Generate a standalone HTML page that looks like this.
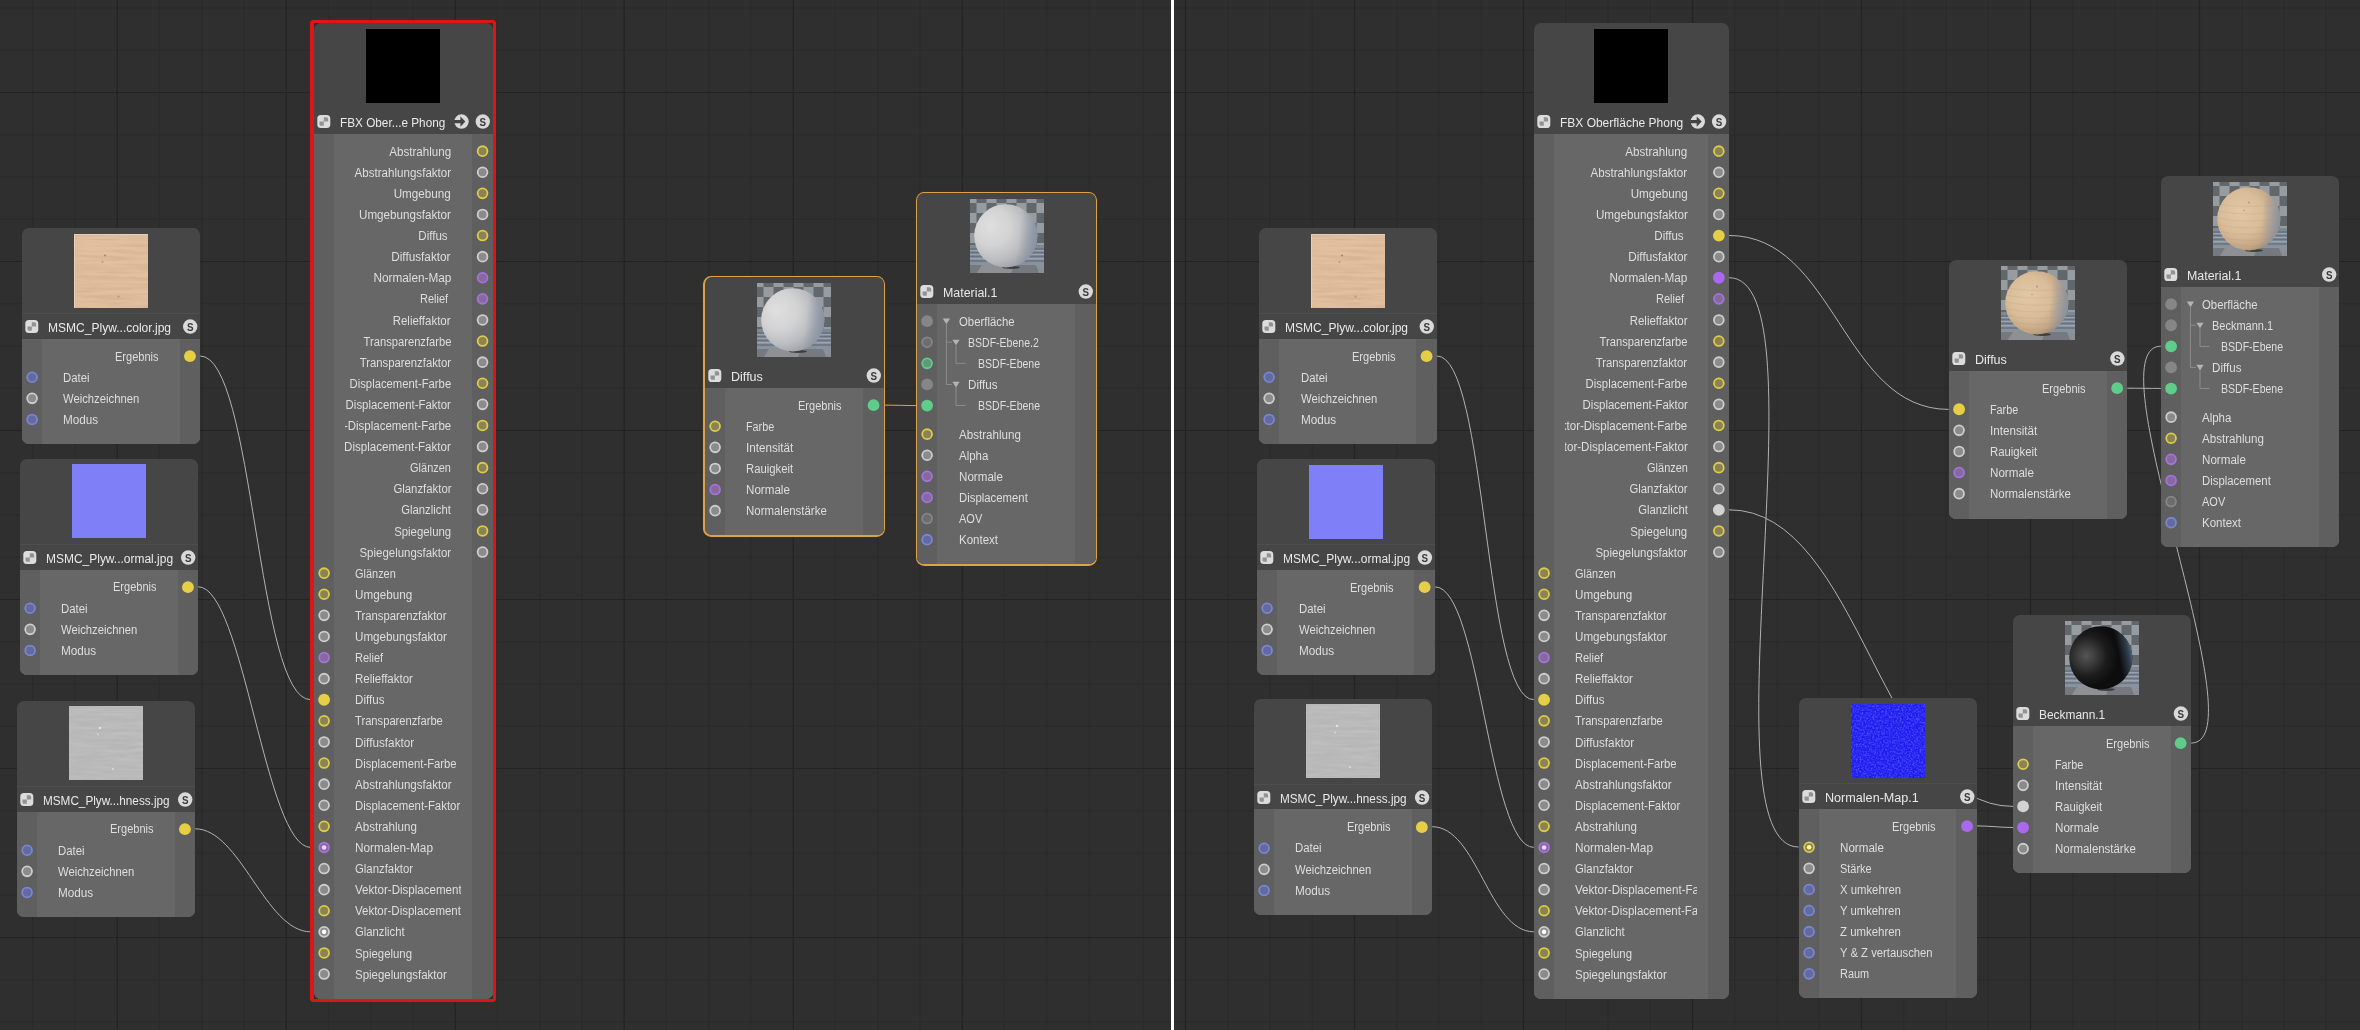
<!DOCTYPE html><html lang="de"><head><meta charset="utf-8"><title>Node-Editor</title><style>
html,body{margin:0;padding:0}
body{width:2360px;height:1030px;overflow:hidden;position:relative;background:#2f2f2f;font-family:"Liberation Sans",sans-serif;font-size:12px;color:#dedede}
.pl{position:absolute;top:0;height:1030px;background-color:#2f2f2f}
.n{position:absolute;background:#464646;border-radius:7px;overflow:hidden}
.n .b{position:absolute;left:0;right:0;top:110.9px;background:#676767}
.n .b i{position:absolute;top:0;bottom:0;background:#5f5f5f}
.n .b i.l{left:0;width:20px}
.n .b i.r{right:0;width:20.7px}
.n .sep{position:absolute;left:0;right:0;top:85.6px;height:1px;background:#4e4e4e}
.pv{position:absolute;top:5.75px;width:74px;height:74px;overflow:hidden}
.pv svg{display:block}
.t{position:absolute;left:26.0px;top:90.2px;height:20px;line-height:20px;white-space:nowrap;overflow:hidden;color:#e9e9e9}
.lo{position:absolute;left:31px;right:39.7px;height:20px;line-height:20px;overflow:hidden;white-space:nowrap;display:flex;justify-content:flex-end}
.lo span{flex:none;display:block;transform-origin:100% 50%;padding-right:2.2px}
.sl{display:inline-block;transform-origin:0 50%}
.li{position:absolute;left:41.5px;right:32px;height:20px;line-height:20px;overflow:hidden;white-space:nowrap}
.ov{position:absolute;left:0;top:0;will-change:transform;font-family:"Liberation Sans",sans-serif}
</style></head><body>
<svg width="0" height="0" style="position:absolute"><defs>
<pattern id="ck" width="20" height="20" patternUnits="userSpaceOnUse" x="-3.5" y="-6"><rect width="20" height="20" fill="#62676c"/><rect width="10" height="10" fill="#979ca1"/><rect x="10" y="10" width="10" height="10" fill="#979ca1"/></pattern>
<linearGradient id="fl" x1="0" y1="0" x2="0" y2="1"><stop offset="0" stop-color="#7d8894"/><stop offset=".7" stop-color="#8a939d"/><stop offset="1" stop-color="#8b8d90"/></linearGradient>
<radialGradient id="gW" cx=".34" cy=".4" r=".74" fx=".24" fy=".34"><stop offset="0" stop-color="#dfdfdf"/><stop offset=".4" stop-color="#d3d3d4"/><stop offset=".68" stop-color="#bcbdc0"/><stop offset=".88" stop-color="#a0a4ab"/><stop offset="1" stop-color="#8a9099"/></radialGradient>
<radialGradient id="gO" cx=".4" cy=".44" r=".68" fx=".36" fy=".38"><stop offset="0" stop-color="#e1c8a6"/><stop offset=".5" stop-color="#d9bd99"/><stop offset=".78" stop-color="#c4a685"/><stop offset=".93" stop-color="#a38d70"/><stop offset="1" stop-color="#897d6b"/></radialGradient>
<radialGradient id="gB" cx=".27" cy=".47" r=".5"><stop offset="0" stop-color="#555"/><stop offset=".3" stop-color="#3c3c3c"/><stop offset=".65" stop-color="#1c1c1c"/><stop offset="1" stop-color="#0d0d0d"/></radialGradient>
<linearGradient id="rimw" x1="0" y1=".45" x2="1" y2=".55"><stop offset=".7" stop-color="#8c96a6" stop-opacity="0"/><stop offset=".86" stop-color="#8c96a6" stop-opacity=".55"/><stop offset="1" stop-color="#8791a2" stop-opacity=".95"/></linearGradient>
<linearGradient id="rimb" x1="0" y1=".6" x2="1" y2=".4"><stop offset=".78" stop-color="#4d6680" stop-opacity="0"/><stop offset=".93" stop-color="#4d6680" stop-opacity=".55"/><stop offset="1" stop-color="#5d7a94" stop-opacity=".9"/></linearGradient>
<clipPath id="cs"><circle cx="35.8" cy="36.8" r="31.6"/></clipPath>
<filter id="fwood" x="0" y="0" width="100%" height="100%" color-interpolation-filters="sRGB"><feTurbulence type="fractalNoise" baseFrequency="0.018 0.3" numOctaves="3" seed="4" result="n"/><feColorMatrix in="n" type="matrix" values="0 0 0 0 0.76  0 0 0 0 0.58  0 0 0 0 0.42  0.7 0 0 0 -0.24" result="c"/><feComposite in="c" in2="SourceGraphic" operator="in" result="ci"/><feMerge><feMergeNode in="SourceGraphic"/><feMergeNode in="ci"/></feMerge></filter>
<filter id="frough" x="0" y="0" width="100%" height="100%" color-interpolation-filters="sRGB"><feTurbulence type="fractalNoise" baseFrequency="0.03 0.3" numOctaves="3" seed="9" result="n"/><feColorMatrix in="n" type="matrix" values="0 0 0 0 0.82  0 0 0 0 0.82  0 0 0 0 0.82  0.65 0 0 0 -0.2" result="c"/><feComposite in="c" in2="SourceGraphic" operator="in" result="ci"/><feMerge><feMergeNode in="SourceGraphic"/><feMergeNode in="ci"/></feMerge></filter>
<filter id="fnoise" x="0" y="0" width="100%" height="100%" color-interpolation-filters="sRGB"><feTurbulence type="fractalNoise" baseFrequency="0.55" numOctaves="2" seed="3" result="n"/><feColorMatrix in="n" type="matrix" values="0 0 0 0 0.30  0 0 0 0 0.32  0 0 0 0 1  2.4 0 0 0 -0.9" result="c"/><feColorMatrix in="n" type="matrix" values="0 0 0 0 0.12  0 0 0 0 0.04  0 0 0 0 0.86  0 1.6 0 0 -0.68" result="d"/><feMerge result="m"><feMergeNode in="SourceGraphic"/><feMergeNode in="c"/><feMergeNode in="d"/></feMerge><feComposite in="m" in2="SourceGraphic" operator="in"/></filter>
</defs></svg>
<svg style="position:absolute;left:0;top:0" width="2360" height="1030" viewBox="0 0 2360 1030"><path d="M0 8.00H2360M0 50.25H2360M0 134.75H2360M0 177.00H2360M0 219.25H2360M0 303.75H2360M0 346.00H2360M0 388.25H2360M0 472.75H2360M0 515.00H2360M0 557.25H2360M0 641.75H2360M0 684.00H2360M0 726.25H2360M0 810.75H2360M0 853.00H2360M0 895.25H2360M0 979.75H2360M0 1022.00H2360M32.70 0V1030M74.95 0V1030M159.45 0V1030M201.70 0V1030M243.95 0V1030M328.45 0V1030M370.70 0V1030M412.95 0V1030M497.45 0V1030M539.70 0V1030M581.95 0V1030M666.45 0V1030M708.70 0V1030M750.95 0V1030M835.45 0V1030M877.70 0V1030M919.95 0V1030M1004.45 0V1030M1046.70 0V1030M1088.95 0V1030M1143.5 0V1030M1227.75 0V1030M1270.00 0V1030M1312.25 0V1030M1396.75 0V1030M1439.00 0V1030M1481.25 0V1030M1565.75 0V1030M1608.00 0V1030M1650.25 0V1030M1734.75 0V1030M1777.00 0V1030M1819.25 0V1030M1903.75 0V1030M1946.00 0V1030M1988.25 0V1030M2072.75 0V1030M2115.00 0V1030M2157.25 0V1030M2241.75 0V1030M2284.00 0V1030M2326.25 0V1030" stroke="#2b2b2b" stroke-width="1.1" fill="none"/><path d="M0 92.50H2360M0 261.50H2360M0 430.50H2360M0 599.50H2360M0 768.50H2360M0 937.50H2360M117.20 0V1030M286.20 0V1030M455.20 0V1030M624.20 0V1030M793.20 0V1030M962.20 0V1030M1185.50 0V1030M1354.50 0V1030M1523.50 0V1030M1692.50 0V1030M1861.50 0V1030M2030.50 0V1030M2199.50 0V1030" stroke="#232323" stroke-width="1.2" fill="none"/></svg>
<div style="position:absolute;left:1170.9px;top:0;width:3.5px;height:1030px;background:#fff"></div>
<svg style="position:absolute;left:0;top:0" width="2360" height="1030" viewBox="0 0 2360 1030" fill="none" stroke-width="1"><path d="M200.2 356.0C254.2 356.0 256.6 699.7 310.6 699.7" stroke="#b2b2b2"/><path d="M198.2 586.8C243.2 586.8 265.6 847.4 310.6 847.4" stroke="#b2b2b2"/><path d="M195.2 828.8C240.2 828.8 265.6 931.8 310.6 931.8" stroke="#b2b2b2"/><path d="M883.6 405.1C893.6 405.1 907.0 405.6 917.0 405.6" stroke="#dda149"/><path d="M1437.0 356.0C1487.0 356.0 1483.8 699.7 1533.8 699.7" stroke="#b2b2b2"/><path d="M1435.1 586.9C1480.1 586.9 1488.8 847.4 1533.8 847.4" stroke="#b2b2b2"/><path d="M1432.2 826.7C1477.2 826.7 1488.8 931.8 1533.8 931.8" stroke="#b2b2b2"/><path d="M1729.1 235.5C1835.1 235.5 1842.6 409.4 1948.6 409.4" stroke="#b2b2b2"/><path d="M1729.1 277.7C1827.1 277.7 1700.6 847.0 1798.6 847.0" stroke="#b2b2b2"/><path d="M1729.1 509.8C1861.1 509.8 1881.1 806.4 2013.1 806.4" stroke="#b2b2b2"/><path d="M1977.1 825.9C1989.1 825.9 2001.1 827.5 2013.1 827.5" stroke="#b2b2b2"/><path d="M2127.2 388.2C2137.2 388.2 2150.9 388.4 2160.9 388.4" stroke="#b2b2b2"/><path d="M2191.2 743.0C2261.2 743.0 2090.9 346.2 2160.9 346.2" stroke="#b2b2b2"/></svg>
<div class="n" style="left:21.80px;top:227.85px;width:178.40px;height:216.25px">
<div class="b" style="height:105.35px"><i class="l"></i><i class="r"></i></div>
<div class="sep"></div>
<div class="pv" style="left:52.20px"><svg width="74" height="74" viewBox="0 0 74 74"><rect width="74" height="74" fill="#e2c1a2" filter="url(#fwood)"/><circle cx="31" cy="21.5" r="1.1" fill="#a8804e" opacity=".8"/><circle cx="28.5" cy="28" r=".9" fill="#b08858" opacity=".7"/><circle cx="44.5" cy="62.5" r="1" fill="#ac8450" opacity=".7"/><path d="M0 .5h74M.5 0v74" stroke="#f0dcc4" stroke-width="1" opacity=".6"/></svg></div>
<div class="t" style="width:133.9px"><span class="sl" style="transform:scaleX(1.0029)">MSMC_Plyw...color.jpg</span></div>
<div class="lo" style="top:118.85px"><span style="transform:scaleX(0.9192)">Ergebnis</span></div>
<div class="li" style="top:139.95px"><span class="sl" style="transform:scaleX(0.9502)">Datei</span></div>
<div class="li" style="top:161.05px"><span class="sl" style="transform:scaleX(0.9393)">Weichzeichnen</span></div>
<div class="li" style="top:182.15px"><span class="sl" style="transform:scaleX(0.9778)">Modus</span></div>
<svg class="ov" width="178.40" height="216.25" viewBox="0 0 178.40 216.25"><g transform="translate(3.30,92.05)"><rect width="13" height="13" rx="3.6" fill="#dcdcdc"/><path d="M6.5 2.2h2.6a1.7 1.7 0 0 1 1.7 1.7v2.6h-4.3z" fill="#929292"/><path d="M2.2 6.5h4.3v4.3h-2.6a1.7 1.7 0 0 1-1.7-1.7z" fill="#929292"/></g><circle cx="168.20" cy="98.55" r="7.2" fill="#d9d9d9"/><text transform="translate(168.20,102.55) scale(.86,1)" text-anchor="middle" font-size="11.4" font-weight="700" fill="#3a3a3a">S</text><circle cx="167.95" cy="128.15" r="5.9" fill="#e6cf45"/><circle cx="10.10" cy="149.25" r="4.9" fill="#626aa0" stroke="#7886d4" stroke-width="1.8"/><circle cx="10.10" cy="170.35" r="4.9" fill="#8b8b8b" stroke="#cdcdcd" stroke-width="1.8"/><circle cx="10.10" cy="191.45" r="4.9" fill="#626aa0" stroke="#7886d4" stroke-width="1.8"/></svg>
</div>
<div class="n" style="left:19.80px;top:458.65px;width:178.40px;height:216.25px">
<div class="b" style="height:105.35px"><i class="l"></i><i class="r"></i></div>
<div class="sep"></div>
<div class="pv" style="left:52.20px"><svg width="74" height="74" viewBox="0 0 74 74"><rect width="74" height="74" fill="#7f7ff8"/></svg></div>
<div class="t" style="width:133.9px"><span class="sl" style="transform:scaleX(0.9977)">MSMC_Plyw...ormal.jpg</span></div>
<div class="lo" style="top:118.85px"><span style="transform:scaleX(0.9192)">Ergebnis</span></div>
<div class="li" style="top:139.95px"><span class="sl" style="transform:scaleX(0.9502)">Datei</span></div>
<div class="li" style="top:161.05px"><span class="sl" style="transform:scaleX(0.9393)">Weichzeichnen</span></div>
<div class="li" style="top:182.15px"><span class="sl" style="transform:scaleX(0.9778)">Modus</span></div>
<svg class="ov" width="178.40" height="216.25" viewBox="0 0 178.40 216.25"><g transform="translate(3.30,92.05)"><rect width="13" height="13" rx="3.6" fill="#dcdcdc"/><path d="M6.5 2.2h2.6a1.7 1.7 0 0 1 1.7 1.7v2.6h-4.3z" fill="#929292"/><path d="M2.2 6.5h4.3v4.3h-2.6a1.7 1.7 0 0 1-1.7-1.7z" fill="#929292"/></g><circle cx="168.20" cy="98.55" r="7.2" fill="#d9d9d9"/><text transform="translate(168.20,102.55) scale(.86,1)" text-anchor="middle" font-size="11.4" font-weight="700" fill="#3a3a3a">S</text><circle cx="167.95" cy="128.15" r="5.9" fill="#e6cf45"/><circle cx="10.10" cy="149.25" r="4.9" fill="#626aa0" stroke="#7886d4" stroke-width="1.8"/><circle cx="10.10" cy="170.35" r="4.9" fill="#8b8b8b" stroke="#cdcdcd" stroke-width="1.8"/><circle cx="10.10" cy="191.45" r="4.9" fill="#626aa0" stroke="#7886d4" stroke-width="1.8"/></svg>
</div>
<div class="n" style="left:16.80px;top:700.65px;width:178.40px;height:216.25px">
<div class="b" style="height:105.35px"><i class="l"></i><i class="r"></i></div>
<div class="sep"></div>
<div class="pv" style="left:52.20px"><svg width="74" height="74" viewBox="0 0 74 74"><rect width="74" height="74" fill="#b7b7b7" filter="url(#frough)"/><circle cx="31" cy="22" r="1.2" fill="#e2e2e2"/><circle cx="29" cy="28.5" r=".9" fill="#dadada"/><circle cx="44" cy="63" r="1" fill="#dcdcdc"/></svg></div>
<div class="t" style="width:133.9px"><span class="sl" style="transform:scaleX(0.9781)">MSMC_Plyw...hness.jpg</span></div>
<div class="lo" style="top:118.85px"><span style="transform:scaleX(0.9192)">Ergebnis</span></div>
<div class="li" style="top:139.95px"><span class="sl" style="transform:scaleX(0.9502)">Datei</span></div>
<div class="li" style="top:161.05px"><span class="sl" style="transform:scaleX(0.9393)">Weichzeichnen</span></div>
<div class="li" style="top:182.15px"><span class="sl" style="transform:scaleX(0.9778)">Modus</span></div>
<svg class="ov" width="178.40" height="216.25" viewBox="0 0 178.40 216.25"><g transform="translate(3.30,92.05)"><rect width="13" height="13" rx="3.6" fill="#dcdcdc"/><path d="M6.5 2.2h2.6a1.7 1.7 0 0 1 1.7 1.7v2.6h-4.3z" fill="#929292"/><path d="M2.2 6.5h4.3v4.3h-2.6a1.7 1.7 0 0 1-1.7-1.7z" fill="#929292"/></g><circle cx="168.20" cy="98.55" r="7.2" fill="#d9d9d9"/><text transform="translate(168.20,102.55) scale(.86,1)" text-anchor="middle" font-size="11.4" font-weight="700" fill="#3a3a3a">S</text><circle cx="167.95" cy="128.15" r="5.9" fill="#e6cf45"/><circle cx="10.10" cy="149.25" r="4.9" fill="#626aa0" stroke="#7886d4" stroke-width="1.8"/><circle cx="10.10" cy="170.35" r="4.9" fill="#8b8b8b" stroke="#cdcdcd" stroke-width="1.8"/><circle cx="10.10" cy="191.45" r="4.9" fill="#626aa0" stroke="#7886d4" stroke-width="1.8"/></svg>
</div>
<div style="position:absolute;left:309.70px;top:19.50px;width:179.20px;height:976.15px;border:solid #de1515;border-width:3.35px 3.4px 3.3px 4.2px;border-radius:3.5px"></div>
<div class="n" style="left:313.80px;top:22.95px;width:179.00px;height:975.85px">
<div class="b" style="height:864.95px"><i class="l"></i><i class="r"></i></div>
<div class="pv" style="left:52.50px"><svg width="74" height="74" viewBox="0 0 74 74"><rect width="74" height="74" fill="#000"/></svg></div>
<div class="t" style="width:114.5px"><span class="sl" style="transform:scaleX(0.9803)">FBX Ober...e Phong</span></div>
<div class="lo" style="top:118.85px"><span style="transform:scaleX(0.9664)">Abstrahlung</span></div>
<div class="lo" style="top:139.95px"><span style="transform:scaleX(0.9652)">Abstrahlungsfaktor</span></div>
<div class="lo" style="top:161.05px"><span style="transform:scaleX(0.9731)">Umgebung</span></div>
<div class="lo" style="top:182.15px"><span style="transform:scaleX(0.9693)">Umgebungsfaktor</span></div>
<div class="lo" style="top:203.25px"><span style="transform:scaleX(0.9646)">Diffus&nbsp;</span></div>
<div class="lo" style="top:224.35px"><span style="transform:scaleX(0.9798)">Diffusfaktor</span></div>
<div class="lo" style="top:245.45px"><span style="transform:scaleX(0.9822)">Normalen-Map</span></div>
<div class="lo" style="top:266.55px"><span style="transform:scaleX(0.9185)">Relief&nbsp;</span></div>
<div class="lo" style="top:287.65px"><span style="transform:scaleX(0.9573)">Relieffaktor</span></div>
<div class="lo" style="top:308.75px"><span style="transform:scaleX(0.9318)">Transparenzfarbe</span></div>
<div class="lo" style="top:329.85px"><span style="transform:scaleX(0.9431)">Transparenzfaktor</span></div>
<div class="lo" style="top:350.95px"><span style="transform:scaleX(0.9406)">Displacement-Farbe</span></div>
<div class="lo" style="top:372.05px"><span style="transform:scaleX(0.9503)">Displacement-Faktor</span></div>
<div class="lo" style="top:393.15px"><span style="transform:scaleX(0.9568)">Vektor-Displacement-Farbe</span></div>
<div class="lo" style="top:414.25px"><span style="transform:scaleX(0.9637)">Vektor-Displacement-Faktor</span></div>
<div class="lo" style="top:435.35px"><span style="transform:scaleX(0.9124)">Glänzen</span></div>
<div class="lo" style="top:456.45px"><span style="transform:scaleX(0.9462)">Glanzfaktor</span></div>
<div class="lo" style="top:477.55px"><span style="transform:scaleX(0.9404)">Glanzlicht</span></div>
<div class="lo" style="top:498.65px"><span style="transform:scaleX(0.9495)">Spiegelung</span></div>
<div class="lo" style="top:519.75px"><span style="transform:scaleX(0.9546)">Spiegelungsfaktor</span></div>
<div class="li" style="top:540.85px"><span class="sl" style="transform:scaleX(0.9124)">Glänzen</span></div>
<div class="li" style="top:561.95px"><span class="sl" style="transform:scaleX(0.9731)">Umgebung</span></div>
<div class="li" style="top:583.05px"><span class="sl" style="transform:scaleX(0.9431)">Transparenzfaktor</span></div>
<div class="li" style="top:604.15px"><span class="sl" style="transform:scaleX(0.9693)">Umgebungsfaktor</span></div>
<div class="li" style="top:625.25px"><span class="sl" style="transform:scaleX(0.9156)">Relief</span></div>
<div class="li" style="top:646.35px"><span class="sl" style="transform:scaleX(0.9573)">Relieffaktor</span></div>
<div class="li" style="top:667.45px"><span class="sl" style="transform:scaleX(0.9667)">Diffus</span></div>
<div class="li" style="top:688.55px"><span class="sl" style="transform:scaleX(0.9318)">Transparenzfarbe</span></div>
<div class="li" style="top:709.65px"><span class="sl" style="transform:scaleX(0.9798)">Diffusfaktor</span></div>
<div class="li" style="top:730.75px"><span class="sl" style="transform:scaleX(0.9406)">Displacement-Farbe</span></div>
<div class="li" style="top:751.85px"><span class="sl" style="transform:scaleX(0.9652)">Abstrahlungsfaktor</span></div>
<div class="li" style="top:772.95px"><span class="sl" style="transform:scaleX(0.9503)">Displacement-Faktor</span></div>
<div class="li" style="top:794.05px"><span class="sl" style="transform:scaleX(0.9664)">Abstrahlung</span></div>
<div class="li" style="top:815.15px"><span class="sl" style="transform:scaleX(0.9822)">Normalen-Map</span></div>
<div class="li" style="top:836.25px"><span class="sl" style="transform:scaleX(0.9462)">Glanzfaktor</span></div>
<div class="li" style="top:857.35px"><span class="sl" style="transform:scaleX(0.9637)">Vektor-Displacement-Faktor</span></div>
<div class="li" style="top:878.45px"><span class="sl" style="transform:scaleX(0.9568)">Vektor-Displacement-Farbe</span></div>
<div class="li" style="top:899.55px"><span class="sl" style="transform:scaleX(0.9404)">Glanzlicht</span></div>
<div class="li" style="top:920.65px"><span class="sl" style="transform:scaleX(0.9495)">Spiegelung</span></div>
<div class="li" style="top:941.75px"><span class="sl" style="transform:scaleX(0.9546)">Spiegelungsfaktor</span></div>
<svg class="ov" width="179.00" height="975.85" viewBox="0 0 179.00 975.85"><g transform="translate(3.30,92.05)"><rect width="13" height="13" rx="3.6" fill="#dcdcdc"/><path d="M6.5 2.2h2.6a1.7 1.7 0 0 1 1.7 1.7v2.6h-4.3z" fill="#929292"/><path d="M2.2 6.5h4.3v4.3h-2.6a1.7 1.7 0 0 1-1.7-1.7z" fill="#929292"/></g><circle cx="168.80" cy="98.55" r="7.2" fill="#d9d9d9"/><text transform="translate(168.80,102.55) scale(.86,1)" text-anchor="middle" font-size="11.4" font-weight="700" fill="#3a3a3a">S</text><g transform="translate(147.50,98.55)"><circle r="7.2" fill="#d9d9d9"/><path d="M-7.6 -1.65H-1.1V-5.1L3.9 0L-1.1 5.1V1.65H-7.6Z" fill="#444"/></g><circle cx="168.55" cy="128.15" r="4.9" fill="#8c8258" stroke="#ddcd45" stroke-width="1.8"/><circle cx="168.55" cy="149.25" r="4.9" fill="#8b8b8b" stroke="#cdcdcd" stroke-width="1.8"/><circle cx="168.55" cy="170.35" r="4.9" fill="#8c8258" stroke="#ddcd45" stroke-width="1.8"/><circle cx="168.55" cy="191.45" r="4.9" fill="#8b8b8b" stroke="#cdcdcd" stroke-width="1.8"/><circle cx="168.55" cy="212.55" r="4.9" fill="#8c8258" stroke="#ddcd45" stroke-width="1.8"/><circle cx="168.55" cy="233.65" r="4.9" fill="#8b8b8b" stroke="#cdcdcd" stroke-width="1.8"/><circle cx="168.55" cy="254.75" r="4.9" fill="#87689f" stroke="#a274dc" stroke-width="1.8"/><circle cx="168.55" cy="275.85" r="4.9" fill="#87689f" stroke="#a274dc" stroke-width="1.8"/><circle cx="168.55" cy="296.95" r="4.9" fill="#8b8b8b" stroke="#cdcdcd" stroke-width="1.8"/><circle cx="168.55" cy="318.05" r="4.9" fill="#8c8258" stroke="#ddcd45" stroke-width="1.8"/><circle cx="168.55" cy="339.15" r="4.9" fill="#8b8b8b" stroke="#cdcdcd" stroke-width="1.8"/><circle cx="168.55" cy="360.25" r="4.9" fill="#8c8258" stroke="#ddcd45" stroke-width="1.8"/><circle cx="168.55" cy="381.35" r="4.9" fill="#8b8b8b" stroke="#cdcdcd" stroke-width="1.8"/><circle cx="168.55" cy="402.45" r="4.9" fill="#8c8258" stroke="#ddcd45" stroke-width="1.8"/><circle cx="168.55" cy="423.55" r="4.9" fill="#8b8b8b" stroke="#cdcdcd" stroke-width="1.8"/><circle cx="168.55" cy="444.65" r="4.9" fill="#8c8258" stroke="#ddcd45" stroke-width="1.8"/><circle cx="168.55" cy="465.75" r="4.9" fill="#8b8b8b" stroke="#cdcdcd" stroke-width="1.8"/><circle cx="168.55" cy="486.85" r="4.9" fill="#8b8b8b" stroke="#cdcdcd" stroke-width="1.8"/><circle cx="168.55" cy="507.95" r="4.9" fill="#8c8258" stroke="#ddcd45" stroke-width="1.8"/><circle cx="168.55" cy="529.05" r="4.9" fill="#8b8b8b" stroke="#cdcdcd" stroke-width="1.8"/><circle cx="10.10" cy="550.15" r="4.9" fill="#8c8258" stroke="#ddcd45" stroke-width="1.8"/><circle cx="10.10" cy="571.25" r="4.9" fill="#8c8258" stroke="#ddcd45" stroke-width="1.8"/><circle cx="10.10" cy="592.35" r="4.9" fill="#8b8b8b" stroke="#cdcdcd" stroke-width="1.8"/><circle cx="10.10" cy="613.45" r="4.9" fill="#8b8b8b" stroke="#cdcdcd" stroke-width="1.8"/><circle cx="10.10" cy="634.55" r="4.9" fill="#87689f" stroke="#a274dc" stroke-width="1.8"/><circle cx="10.10" cy="655.65" r="4.9" fill="#8b8b8b" stroke="#cdcdcd" stroke-width="1.8"/><circle cx="10.10" cy="676.75" r="5.9" fill="#e6cf45"/><circle cx="10.10" cy="697.85" r="4.9" fill="#8c8258" stroke="#ddcd45" stroke-width="1.8"/><circle cx="10.10" cy="718.95" r="4.9" fill="#8b8b8b" stroke="#cdcdcd" stroke-width="1.8"/><circle cx="10.10" cy="740.05" r="4.9" fill="#8c8258" stroke="#ddcd45" stroke-width="1.8"/><circle cx="10.10" cy="761.15" r="4.9" fill="#8b8b8b" stroke="#cdcdcd" stroke-width="1.8"/><circle cx="10.10" cy="782.25" r="4.9" fill="#8b8b8b" stroke="#cdcdcd" stroke-width="1.8"/><circle cx="10.10" cy="803.35" r="4.9" fill="#8c8258" stroke="#ddcd45" stroke-width="1.8"/><circle cx="10.10" cy="824.45" r="4.9" fill="#87689f" stroke="#a274dc" stroke-width="1.8"/><circle cx="10.10" cy="824.45" r="2.3" fill="#f2d2ff"/><circle cx="10.10" cy="845.55" r="4.9" fill="#8b8b8b" stroke="#cdcdcd" stroke-width="1.8"/><circle cx="10.10" cy="866.65" r="4.9" fill="#8b8b8b" stroke="#cdcdcd" stroke-width="1.8"/><circle cx="10.10" cy="887.75" r="4.9" fill="#8c8258" stroke="#ddcd45" stroke-width="1.8"/><circle cx="10.10" cy="908.85" r="4.9" fill="#8b8b8b" stroke="#cdcdcd" stroke-width="1.8"/><circle cx="10.10" cy="908.85" r="2.3" fill="#ffffff"/><circle cx="10.10" cy="929.95" r="4.9" fill="#8c8258" stroke="#ddcd45" stroke-width="1.8"/><circle cx="10.10" cy="951.05" r="4.9" fill="#8b8b8b" stroke="#cdcdcd" stroke-width="1.8"/></svg>
</div>
<div style="position:absolute;left:703.40px;top:275.75px;width:181.40px;height:260.85px;background:#dda149;border-radius:8.5px;box-shadow:0 0 1px #7a4a08"></div>
<div class="n" style="left:704.60px;top:276.95px;width:179.00px;height:258.45px">
<div class="b" style="height:147.55px"><i class="l"></i><i class="r"></i></div>
<div class="pv" style="left:52.50px"><svg width="74" height="74" viewBox="0 0 74 74"><rect width="74" height="74" fill="url(#ck)"/><rect y="46" width="74" height="28" fill="url(#fl)"/><path d="M0 50h74M0 53.5h74M0 57.5h74M0 62h74" stroke="#5d6a78" stroke-width="1.4" opacity=".75"/><path d="M0 51.7h74M0 55.5h74M0 59.7h74" stroke="#a9b4c0" stroke-width="1.2" opacity=".6"/><path d="M0 66h12l-5 8h-7zM44 66h22l3 8h-28z" fill="#6f747a" opacity=".8"/><path d="M12 66h32l-3 8h-34z" fill="#8e9092" opacity=".9"/><ellipse cx="41" cy="68.5" rx="9" ry="1.5" fill="#2c2c2c" opacity=".8"/><circle cx="35.8" cy="36.8" r="31.6" fill="url(#gW)"/><circle cx="35.8" cy="36.8" r="31.6" fill="url(#rimw)"/></svg></div>
<div class="t" style="width:134.5px"><span class="sl" style="transform:scaleX(1.0473)">Diffus</span></div>
<div class="lo" style="top:118.85px"><span style="transform:scaleX(0.9192)">Ergebnis</span></div>
<div class="li" style="top:139.95px"><span class="sl" style="transform:scaleX(0.9009)">Farbe</span></div>
<div class="li" style="top:161.05px"><span class="sl" style="transform:scaleX(0.9715)">Intensität</span></div>
<div class="li" style="top:182.15px"><span class="sl" style="transform:scaleX(0.9437)">Rauigkeit</span></div>
<div class="li" style="top:203.25px"><span class="sl" style="transform:scaleX(0.9680)">Normale</span></div>
<div class="li" style="top:224.35px"><span class="sl" style="transform:scaleX(0.9536)">Normalenstärke</span></div>
<svg class="ov" width="179.00" height="258.45" viewBox="0 0 179.00 258.45"><g transform="translate(3.30,92.05)"><rect width="13" height="13" rx="3.6" fill="#dcdcdc"/><path d="M6.5 2.2h2.6a1.7 1.7 0 0 1 1.7 1.7v2.6h-4.3z" fill="#929292"/><path d="M2.2 6.5h4.3v4.3h-2.6a1.7 1.7 0 0 1-1.7-1.7z" fill="#929292"/></g><circle cx="168.80" cy="98.55" r="7.2" fill="#d9d9d9"/><text transform="translate(168.80,102.55) scale(.86,1)" text-anchor="middle" font-size="11.4" font-weight="700" fill="#3a3a3a">S</text><circle cx="168.55" cy="128.15" r="5.9" fill="#5fcc8a"/><circle cx="10.10" cy="149.25" r="4.9" fill="#8c8258" stroke="#ddcd45" stroke-width="1.8"/><circle cx="10.10" cy="170.35" r="4.9" fill="#8b8b8b" stroke="#cdcdcd" stroke-width="1.8"/><circle cx="10.10" cy="191.45" r="4.9" fill="#8b8b8b" stroke="#cdcdcd" stroke-width="1.8"/><circle cx="10.10" cy="212.55" r="4.9" fill="#87689f" stroke="#a274dc" stroke-width="1.8"/><circle cx="10.10" cy="233.65" r="4.9" fill="#8b8b8b" stroke="#cdcdcd" stroke-width="1.8"/></svg>
</div>
<div style="position:absolute;left:915.80px;top:191.80px;width:181.40px;height:373.85px;background:#dda149;border-radius:8.5px;box-shadow:0 0 1px #7a4a08"></div>
<div class="n" style="left:917.00px;top:193.00px;width:179.00px;height:371.45px">
<div class="b" style="height:260.55px"><i class="l"></i><i class="r"></i></div>
<div class="pv" style="left:52.50px"><svg width="74" height="74" viewBox="0 0 74 74"><rect width="74" height="74" fill="url(#ck)"/><rect y="46" width="74" height="28" fill="url(#fl)"/><path d="M0 50h74M0 53.5h74M0 57.5h74M0 62h74" stroke="#5d6a78" stroke-width="1.4" opacity=".75"/><path d="M0 51.7h74M0 55.5h74M0 59.7h74" stroke="#a9b4c0" stroke-width="1.2" opacity=".6"/><path d="M0 66h12l-5 8h-7zM44 66h22l3 8h-28z" fill="#6f747a" opacity=".8"/><path d="M12 66h32l-3 8h-34z" fill="#8e9092" opacity=".9"/><ellipse cx="41" cy="68.5" rx="9" ry="1.5" fill="#2c2c2c" opacity=".8"/><circle cx="35.8" cy="36.8" r="31.6" fill="url(#gW)"/><circle cx="35.8" cy="36.8" r="31.6" fill="url(#rimw)"/></svg></div>
<div class="t" style="width:134.5px"><span class="sl" style="transform:scaleX(1.0324)">Material.1</span></div>
<div class="li" style="top:118.85px;left:41.5px"><span class="sl" style="transform:scaleX(0.9460)">Oberfläche</span></div>
<div class="li" style="top:139.95px;left:51.3px"><span class="sl" style="transform:scaleX(0.8772)">BSDF-Ebene.2</span></div>
<div class="li" style="top:161.05px;left:60.6px"><span class="sl" style="transform:scaleX(0.8783)">BSDF-Ebene</span></div>
<div class="li" style="top:182.15px;left:51.3px"><span class="sl" style="transform:scaleX(0.9667)">Diffus</span></div>
<div class="li" style="top:203.25px;left:60.6px"><span class="sl" style="transform:scaleX(0.8783)">BSDF-Ebene</span></div>
<div class="li" style="top:231.85px"><span class="sl" style="transform:scaleX(0.9664)">Abstrahlung</span></div>
<div class="li" style="top:252.95px"><span class="sl" style="transform:scaleX(0.9557)">Alpha</span></div>
<div class="li" style="top:274.05px"><span class="sl" style="transform:scaleX(0.9680)">Normale</span></div>
<div class="li" style="top:295.15px"><span class="sl" style="transform:scaleX(0.9462)">Displacement</span></div>
<div class="li" style="top:316.25px"><span class="sl" style="transform:scaleX(0.9173)">AOV</span></div>
<div class="li" style="top:337.35px"><span class="sl" style="transform:scaleX(0.9587)">Kontext</span></div>
<svg class="ov" width="179.00" height="371.45" viewBox="0 0 179.00 371.45"><g transform="translate(3.30,92.05)"><rect width="13" height="13" rx="3.6" fill="#dcdcdc"/><path d="M6.5 2.2h2.6a1.7 1.7 0 0 1 1.7 1.7v2.6h-4.3z" fill="#929292"/><path d="M2.2 6.5h4.3v4.3h-2.6a1.7 1.7 0 0 1-1.7-1.7z" fill="#929292"/></g><circle cx="168.80" cy="98.55" r="7.2" fill="#d9d9d9"/><text transform="translate(168.80,102.55) scale(.86,1)" text-anchor="middle" font-size="11.4" font-weight="700" fill="#3a3a3a">S</text><path d="M29.40 131.15V191.45 M29.40 149.25H35.00 M29.40 191.45H35.00 M39.00 152.25V170.35H48.50 M39.00 194.45V212.55H48.50" fill="none" stroke="#919191" stroke-width="0.9"/><path d="M25.80 125.55h7.2l-3.6 5.6z" fill="#b4b4b4"/><path d="M35.40 146.65h7.2l-3.6 5.6z" fill="#b4b4b4"/><path d="M35.40 188.85h7.2l-3.6 5.6z" fill="#b4b4b4"/><circle cx="10.10" cy="128.15" r="5.9" fill="#868686"/><circle cx="10.10" cy="149.25" r="4.9" fill="#6d6d6d" stroke="#868686" stroke-width="1.8"/><circle cx="10.10" cy="170.35" r="4.9" fill="#5f9a78" stroke="#63c98b" stroke-width="1.8"/><circle cx="10.10" cy="191.45" r="5.9" fill="#868686"/><circle cx="10.10" cy="212.55" r="5.9" fill="#5fcc8a"/><circle cx="10.10" cy="241.15" r="4.9" fill="#8c8258" stroke="#ddcd45" stroke-width="1.8"/><circle cx="10.10" cy="262.25" r="4.9" fill="#8b8b8b" stroke="#cdcdcd" stroke-width="1.8"/><circle cx="10.10" cy="283.35" r="4.9" fill="#87689f" stroke="#a274dc" stroke-width="1.8"/><circle cx="10.10" cy="304.45" r="4.9" fill="#87689f" stroke="#a274dc" stroke-width="1.8"/><circle cx="10.10" cy="325.55" r="4.9" fill="#6d6d6d" stroke="#868686" stroke-width="1.8"/><circle cx="10.10" cy="346.65" r="4.9" fill="#626aa0" stroke="#7886d4" stroke-width="1.8"/></svg>
</div>
<div class="n" style="left:1259.00px;top:227.80px;width:178.00px;height:216.25px">
<div class="b" style="height:105.35px"><i class="l"></i><i class="r"></i></div>
<div class="sep"></div>
<div class="pv" style="left:52.00px"><svg width="74" height="74" viewBox="0 0 74 74"><rect width="74" height="74" fill="#e2c1a2" filter="url(#fwood)"/><circle cx="31" cy="21.5" r="1.1" fill="#a8804e" opacity=".8"/><circle cx="28.5" cy="28" r=".9" fill="#b08858" opacity=".7"/><circle cx="44.5" cy="62.5" r="1" fill="#ac8450" opacity=".7"/><path d="M0 .5h74M.5 0v74" stroke="#f0dcc4" stroke-width="1" opacity=".6"/></svg></div>
<div class="t" style="width:133.5px"><span class="sl" style="transform:scaleX(1.0029)">MSMC_Plyw...color.jpg</span></div>
<div class="lo" style="top:118.85px"><span style="transform:scaleX(0.9192)">Ergebnis</span></div>
<div class="li" style="top:139.95px"><span class="sl" style="transform:scaleX(0.9502)">Datei</span></div>
<div class="li" style="top:161.05px"><span class="sl" style="transform:scaleX(0.9393)">Weichzeichnen</span></div>
<div class="li" style="top:182.15px"><span class="sl" style="transform:scaleX(0.9778)">Modus</span></div>
<svg class="ov" width="178.00" height="216.25" viewBox="0 0 178.00 216.25"><g transform="translate(3.30,92.05)"><rect width="13" height="13" rx="3.6" fill="#dcdcdc"/><path d="M6.5 2.2h2.6a1.7 1.7 0 0 1 1.7 1.7v2.6h-4.3z" fill="#929292"/><path d="M2.2 6.5h4.3v4.3h-2.6a1.7 1.7 0 0 1-1.7-1.7z" fill="#929292"/></g><circle cx="167.80" cy="98.55" r="7.2" fill="#d9d9d9"/><text transform="translate(167.80,102.55) scale(.86,1)" text-anchor="middle" font-size="11.4" font-weight="700" fill="#3a3a3a">S</text><circle cx="167.55" cy="128.15" r="5.9" fill="#e6cf45"/><circle cx="10.10" cy="149.25" r="4.9" fill="#626aa0" stroke="#7886d4" stroke-width="1.8"/><circle cx="10.10" cy="170.35" r="4.9" fill="#8b8b8b" stroke="#cdcdcd" stroke-width="1.8"/><circle cx="10.10" cy="191.45" r="4.9" fill="#626aa0" stroke="#7886d4" stroke-width="1.8"/></svg>
</div>
<div class="n" style="left:1257.00px;top:458.75px;width:178.10px;height:216.25px">
<div class="b" style="height:105.35px"><i class="l"></i><i class="r"></i></div>
<div class="sep"></div>
<div class="pv" style="left:52.05px"><svg width="74" height="74" viewBox="0 0 74 74"><rect width="74" height="74" fill="#7f7ff8"/></svg></div>
<div class="t" style="width:133.6px"><span class="sl" style="transform:scaleX(0.9977)">MSMC_Plyw...ormal.jpg</span></div>
<div class="lo" style="top:118.85px"><span style="transform:scaleX(0.9192)">Ergebnis</span></div>
<div class="li" style="top:139.95px"><span class="sl" style="transform:scaleX(0.9502)">Datei</span></div>
<div class="li" style="top:161.05px"><span class="sl" style="transform:scaleX(0.9393)">Weichzeichnen</span></div>
<div class="li" style="top:182.15px"><span class="sl" style="transform:scaleX(0.9778)">Modus</span></div>
<svg class="ov" width="178.10" height="216.25" viewBox="0 0 178.10 216.25"><g transform="translate(3.30,92.05)"><rect width="13" height="13" rx="3.6" fill="#dcdcdc"/><path d="M6.5 2.2h2.6a1.7 1.7 0 0 1 1.7 1.7v2.6h-4.3z" fill="#929292"/><path d="M2.2 6.5h4.3v4.3h-2.6a1.7 1.7 0 0 1-1.7-1.7z" fill="#929292"/></g><circle cx="167.90" cy="98.55" r="7.2" fill="#d9d9d9"/><text transform="translate(167.90,102.55) scale(.86,1)" text-anchor="middle" font-size="11.4" font-weight="700" fill="#3a3a3a">S</text><circle cx="167.65" cy="128.15" r="5.9" fill="#e6cf45"/><circle cx="10.10" cy="149.25" r="4.9" fill="#626aa0" stroke="#7886d4" stroke-width="1.8"/><circle cx="10.10" cy="170.35" r="4.9" fill="#8b8b8b" stroke="#cdcdcd" stroke-width="1.8"/><circle cx="10.10" cy="191.45" r="4.9" fill="#626aa0" stroke="#7886d4" stroke-width="1.8"/></svg>
</div>
<div class="n" style="left:1253.90px;top:698.55px;width:178.30px;height:216.25px">
<div class="b" style="height:105.35px"><i class="l"></i><i class="r"></i></div>
<div class="sep"></div>
<div class="pv" style="left:52.15px"><svg width="74" height="74" viewBox="0 0 74 74"><rect width="74" height="74" fill="#b7b7b7" filter="url(#frough)"/><circle cx="31" cy="22" r="1.2" fill="#e2e2e2"/><circle cx="29" cy="28.5" r=".9" fill="#dadada"/><circle cx="44" cy="63" r="1" fill="#dcdcdc"/></svg></div>
<div class="t" style="width:133.8px"><span class="sl" style="transform:scaleX(0.9781)">MSMC_Plyw...hness.jpg</span></div>
<div class="lo" style="top:118.85px"><span style="transform:scaleX(0.9192)">Ergebnis</span></div>
<div class="li" style="top:139.95px"><span class="sl" style="transform:scaleX(0.9502)">Datei</span></div>
<div class="li" style="top:161.05px"><span class="sl" style="transform:scaleX(0.9393)">Weichzeichnen</span></div>
<div class="li" style="top:182.15px"><span class="sl" style="transform:scaleX(0.9778)">Modus</span></div>
<svg class="ov" width="178.30" height="216.25" viewBox="0 0 178.30 216.25"><g transform="translate(3.30,92.05)"><rect width="13" height="13" rx="3.6" fill="#dcdcdc"/><path d="M6.5 2.2h2.6a1.7 1.7 0 0 1 1.7 1.7v2.6h-4.3z" fill="#929292"/><path d="M2.2 6.5h4.3v4.3h-2.6a1.7 1.7 0 0 1-1.7-1.7z" fill="#929292"/></g><circle cx="168.10" cy="98.55" r="7.2" fill="#d9d9d9"/><text transform="translate(168.10,102.55) scale(.86,1)" text-anchor="middle" font-size="11.4" font-weight="700" fill="#3a3a3a">S</text><circle cx="167.85" cy="128.15" r="5.9" fill="#e6cf45"/><circle cx="10.10" cy="149.25" r="4.9" fill="#626aa0" stroke="#7886d4" stroke-width="1.8"/><circle cx="10.10" cy="170.35" r="4.9" fill="#8b8b8b" stroke="#cdcdcd" stroke-width="1.8"/><circle cx="10.10" cy="191.45" r="4.9" fill="#626aa0" stroke="#7886d4" stroke-width="1.8"/></svg>
</div>
<div class="n" style="left:1533.80px;top:22.95px;width:195.30px;height:975.85px">
<div class="b" style="height:864.95px"><i class="l"></i><i class="r"></i></div>
<div class="pv" style="left:60.65px"><svg width="74" height="74" viewBox="0 0 74 74"><rect width="74" height="74" fill="#000"/></svg></div>
<div class="t" style="width:130.8px"><span class="sl" style="transform:scaleX(0.9987)">FBX Oberfläche Phong</span></div>
<div class="lo" style="top:118.85px"><span style="transform:scaleX(0.9664)">Abstrahlung</span></div>
<div class="lo" style="top:139.95px"><span style="transform:scaleX(0.9652)">Abstrahlungsfaktor</span></div>
<div class="lo" style="top:161.05px"><span style="transform:scaleX(0.9731)">Umgebung</span></div>
<div class="lo" style="top:182.15px"><span style="transform:scaleX(0.9693)">Umgebungsfaktor</span></div>
<div class="lo" style="top:203.25px"><span style="transform:scaleX(0.9646)">Diffus&nbsp;</span></div>
<div class="lo" style="top:224.35px"><span style="transform:scaleX(0.9798)">Diffusfaktor</span></div>
<div class="lo" style="top:245.45px"><span style="transform:scaleX(0.9822)">Normalen-Map</span></div>
<div class="lo" style="top:266.55px"><span style="transform:scaleX(0.9185)">Relief&nbsp;</span></div>
<div class="lo" style="top:287.65px"><span style="transform:scaleX(0.9573)">Relieffaktor</span></div>
<div class="lo" style="top:308.75px"><span style="transform:scaleX(0.9318)">Transparenzfarbe</span></div>
<div class="lo" style="top:329.85px"><span style="transform:scaleX(0.9431)">Transparenzfaktor</span></div>
<div class="lo" style="top:350.95px"><span style="transform:scaleX(0.9406)">Displacement-Farbe</span></div>
<div class="lo" style="top:372.05px"><span style="transform:scaleX(0.9503)">Displacement-Faktor</span></div>
<div class="lo" style="top:393.15px"><span style="transform:scaleX(0.9568)">Vektor-Displacement-Farbe</span></div>
<div class="lo" style="top:414.25px"><span style="transform:scaleX(0.9637)">Vektor-Displacement-Faktor</span></div>
<div class="lo" style="top:435.35px"><span style="transform:scaleX(0.9124)">Glänzen</span></div>
<div class="lo" style="top:456.45px"><span style="transform:scaleX(0.9462)">Glanzfaktor</span></div>
<div class="lo" style="top:477.55px"><span style="transform:scaleX(0.9404)">Glanzlicht</span></div>
<div class="lo" style="top:498.65px"><span style="transform:scaleX(0.9495)">Spiegelung</span></div>
<div class="lo" style="top:519.75px"><span style="transform:scaleX(0.9546)">Spiegelungsfaktor</span></div>
<div class="li" style="top:540.85px"><span class="sl" style="transform:scaleX(0.9124)">Glänzen</span></div>
<div class="li" style="top:561.95px"><span class="sl" style="transform:scaleX(0.9731)">Umgebung</span></div>
<div class="li" style="top:583.05px"><span class="sl" style="transform:scaleX(0.9431)">Transparenzfaktor</span></div>
<div class="li" style="top:604.15px"><span class="sl" style="transform:scaleX(0.9693)">Umgebungsfaktor</span></div>
<div class="li" style="top:625.25px"><span class="sl" style="transform:scaleX(0.9156)">Relief</span></div>
<div class="li" style="top:646.35px"><span class="sl" style="transform:scaleX(0.9573)">Relieffaktor</span></div>
<div class="li" style="top:667.45px"><span class="sl" style="transform:scaleX(0.9667)">Diffus</span></div>
<div class="li" style="top:688.55px"><span class="sl" style="transform:scaleX(0.9318)">Transparenzfarbe</span></div>
<div class="li" style="top:709.65px"><span class="sl" style="transform:scaleX(0.9798)">Diffusfaktor</span></div>
<div class="li" style="top:730.75px"><span class="sl" style="transform:scaleX(0.9406)">Displacement-Farbe</span></div>
<div class="li" style="top:751.85px"><span class="sl" style="transform:scaleX(0.9652)">Abstrahlungsfaktor</span></div>
<div class="li" style="top:772.95px"><span class="sl" style="transform:scaleX(0.9503)">Displacement-Faktor</span></div>
<div class="li" style="top:794.05px"><span class="sl" style="transform:scaleX(0.9664)">Abstrahlung</span></div>
<div class="li" style="top:815.15px"><span class="sl" style="transform:scaleX(0.9822)">Normalen-Map</span></div>
<div class="li" style="top:836.25px"><span class="sl" style="transform:scaleX(0.9462)">Glanzfaktor</span></div>
<div class="li" style="top:857.35px"><span class="sl" style="transform:scaleX(0.9637)">Vektor-Displacement-Faktor</span></div>
<div class="li" style="top:878.45px"><span class="sl" style="transform:scaleX(0.9568)">Vektor-Displacement-Farbe</span></div>
<div class="li" style="top:899.55px"><span class="sl" style="transform:scaleX(0.9404)">Glanzlicht</span></div>
<div class="li" style="top:920.65px"><span class="sl" style="transform:scaleX(0.9495)">Spiegelung</span></div>
<div class="li" style="top:941.75px"><span class="sl" style="transform:scaleX(0.9546)">Spiegelungsfaktor</span></div>
<svg class="ov" width="195.30" height="975.85" viewBox="0 0 195.30 975.85"><g transform="translate(3.30,92.05)"><rect width="13" height="13" rx="3.6" fill="#dcdcdc"/><path d="M6.5 2.2h2.6a1.7 1.7 0 0 1 1.7 1.7v2.6h-4.3z" fill="#929292"/><path d="M2.2 6.5h4.3v4.3h-2.6a1.7 1.7 0 0 1-1.7-1.7z" fill="#929292"/></g><circle cx="185.10" cy="98.55" r="7.2" fill="#d9d9d9"/><text transform="translate(185.10,102.55) scale(.86,1)" text-anchor="middle" font-size="11.4" font-weight="700" fill="#3a3a3a">S</text><g transform="translate(163.80,98.55)"><circle r="7.2" fill="#d9d9d9"/><path d="M-7.6 -1.65H-1.1V-5.1L3.9 0L-1.1 5.1V1.65H-7.6Z" fill="#444"/></g><circle cx="184.85" cy="128.15" r="4.9" fill="#8c8258" stroke="#ddcd45" stroke-width="1.8"/><circle cx="184.85" cy="149.25" r="4.9" fill="#8b8b8b" stroke="#cdcdcd" stroke-width="1.8"/><circle cx="184.85" cy="170.35" r="4.9" fill="#8c8258" stroke="#ddcd45" stroke-width="1.8"/><circle cx="184.85" cy="191.45" r="4.9" fill="#8b8b8b" stroke="#cdcdcd" stroke-width="1.8"/><circle cx="184.85" cy="212.55" r="5.9" fill="#e6cf45"/><circle cx="184.85" cy="233.65" r="4.9" fill="#8b8b8b" stroke="#cdcdcd" stroke-width="1.8"/><circle cx="184.85" cy="254.75" r="5.9" fill="#aa68ee"/><circle cx="184.85" cy="275.85" r="4.9" fill="#87689f" stroke="#a274dc" stroke-width="1.8"/><circle cx="184.85" cy="296.95" r="4.9" fill="#8b8b8b" stroke="#cdcdcd" stroke-width="1.8"/><circle cx="184.85" cy="318.05" r="4.9" fill="#8c8258" stroke="#ddcd45" stroke-width="1.8"/><circle cx="184.85" cy="339.15" r="4.9" fill="#8b8b8b" stroke="#cdcdcd" stroke-width="1.8"/><circle cx="184.85" cy="360.25" r="4.9" fill="#8c8258" stroke="#ddcd45" stroke-width="1.8"/><circle cx="184.85" cy="381.35" r="4.9" fill="#8b8b8b" stroke="#cdcdcd" stroke-width="1.8"/><circle cx="184.85" cy="402.45" r="4.9" fill="#8c8258" stroke="#ddcd45" stroke-width="1.8"/><circle cx="184.85" cy="423.55" r="4.9" fill="#8b8b8b" stroke="#cdcdcd" stroke-width="1.8"/><circle cx="184.85" cy="444.65" r="4.9" fill="#8c8258" stroke="#ddcd45" stroke-width="1.8"/><circle cx="184.85" cy="465.75" r="4.9" fill="#8b8b8b" stroke="#cdcdcd" stroke-width="1.8"/><circle cx="184.85" cy="486.85" r="5.9" fill="#d2d2d2"/><circle cx="184.85" cy="507.95" r="4.9" fill="#8c8258" stroke="#ddcd45" stroke-width="1.8"/><circle cx="184.85" cy="529.05" r="4.9" fill="#8b8b8b" stroke="#cdcdcd" stroke-width="1.8"/><circle cx="10.10" cy="550.15" r="4.9" fill="#8c8258" stroke="#ddcd45" stroke-width="1.8"/><circle cx="10.10" cy="571.25" r="4.9" fill="#8c8258" stroke="#ddcd45" stroke-width="1.8"/><circle cx="10.10" cy="592.35" r="4.9" fill="#8b8b8b" stroke="#cdcdcd" stroke-width="1.8"/><circle cx="10.10" cy="613.45" r="4.9" fill="#8b8b8b" stroke="#cdcdcd" stroke-width="1.8"/><circle cx="10.10" cy="634.55" r="4.9" fill="#87689f" stroke="#a274dc" stroke-width="1.8"/><circle cx="10.10" cy="655.65" r="4.9" fill="#8b8b8b" stroke="#cdcdcd" stroke-width="1.8"/><circle cx="10.10" cy="676.75" r="5.9" fill="#e6cf45"/><circle cx="10.10" cy="697.85" r="4.9" fill="#8c8258" stroke="#ddcd45" stroke-width="1.8"/><circle cx="10.10" cy="718.95" r="4.9" fill="#8b8b8b" stroke="#cdcdcd" stroke-width="1.8"/><circle cx="10.10" cy="740.05" r="4.9" fill="#8c8258" stroke="#ddcd45" stroke-width="1.8"/><circle cx="10.10" cy="761.15" r="4.9" fill="#8b8b8b" stroke="#cdcdcd" stroke-width="1.8"/><circle cx="10.10" cy="782.25" r="4.9" fill="#8b8b8b" stroke="#cdcdcd" stroke-width="1.8"/><circle cx="10.10" cy="803.35" r="4.9" fill="#8c8258" stroke="#ddcd45" stroke-width="1.8"/><circle cx="10.10" cy="824.45" r="4.9" fill="#87689f" stroke="#a274dc" stroke-width="1.8"/><circle cx="10.10" cy="824.45" r="2.3" fill="#f2d2ff"/><circle cx="10.10" cy="845.55" r="4.9" fill="#8b8b8b" stroke="#cdcdcd" stroke-width="1.8"/><circle cx="10.10" cy="866.65" r="4.9" fill="#8b8b8b" stroke="#cdcdcd" stroke-width="1.8"/><circle cx="10.10" cy="887.75" r="4.9" fill="#8c8258" stroke="#ddcd45" stroke-width="1.8"/><circle cx="10.10" cy="908.85" r="4.9" fill="#8b8b8b" stroke="#cdcdcd" stroke-width="1.8"/><circle cx="10.10" cy="908.85" r="2.3" fill="#ffffff"/><circle cx="10.10" cy="929.95" r="4.9" fill="#8c8258" stroke="#ddcd45" stroke-width="1.8"/><circle cx="10.10" cy="951.05" r="4.9" fill="#8b8b8b" stroke="#cdcdcd" stroke-width="1.8"/></svg>
</div>
<div class="n" style="left:1948.60px;top:260.10px;width:178.60px;height:258.45px">
<div class="b" style="height:147.55px"><i class="l"></i><i class="r"></i></div>
<div class="pv" style="left:52.30px"><svg width="74" height="74" viewBox="0 0 74 74"><rect width="74" height="74" fill="url(#ck)"/><rect y="46" width="74" height="28" fill="url(#fl)"/><path d="M0 50h74M0 53.5h74M0 57.5h74M0 62h74" stroke="#5d6a78" stroke-width="1.4" opacity=".75"/><path d="M0 51.7h74M0 55.5h74M0 59.7h74" stroke="#a9b4c0" stroke-width="1.2" opacity=".6"/><path d="M0 66h12l-5 8h-7zM44 66h22l3 8h-28z" fill="#6f747a" opacity=".8"/><path d="M12 66h32l-3 8h-34z" fill="#8e9092" opacity=".9"/><ellipse cx="41" cy="68.5" rx="9" ry="1.5" fill="#2c2c2c" opacity=".8"/><circle cx="35.8" cy="36.8" r="31.6" fill="url(#gO)"/><g clip-path="url(#cs)" opacity=".24" fill="none" stroke="#b08a5e" stroke-width=".7"><path d="M4 22q32 5 64 0M4 29q32 6 64 0M4 36q32 6.5 64 0M4 42.5q32 7 64 0M4 49q32 7 64 0M4 55q32 7 64 0M8 61q28 6 56 0"/></g><circle cx="36" cy="20.5" r="1" fill="#9a7040" opacity=".5"/><circle cx="31" cy="28.5" r=".8" fill="#9a7040" opacity=".45"/><circle cx="35.8" cy="36.8" r="31.6" fill="url(#rimw)"/></svg></div>
<div class="t" style="width:134.1px"><span class="sl" style="transform:scaleX(1.0473)">Diffus</span></div>
<div class="lo" style="top:118.85px"><span style="transform:scaleX(0.9192)">Ergebnis</span></div>
<div class="li" style="top:139.95px"><span class="sl" style="transform:scaleX(0.9009)">Farbe</span></div>
<div class="li" style="top:161.05px"><span class="sl" style="transform:scaleX(0.9715)">Intensität</span></div>
<div class="li" style="top:182.15px"><span class="sl" style="transform:scaleX(0.9437)">Rauigkeit</span></div>
<div class="li" style="top:203.25px"><span class="sl" style="transform:scaleX(0.9680)">Normale</span></div>
<div class="li" style="top:224.35px"><span class="sl" style="transform:scaleX(0.9536)">Normalenstärke</span></div>
<svg class="ov" width="178.60" height="258.45" viewBox="0 0 178.60 258.45"><g transform="translate(3.30,92.05)"><rect width="13" height="13" rx="3.6" fill="#dcdcdc"/><path d="M6.5 2.2h2.6a1.7 1.7 0 0 1 1.7 1.7v2.6h-4.3z" fill="#929292"/><path d="M2.2 6.5h4.3v4.3h-2.6a1.7 1.7 0 0 1-1.7-1.7z" fill="#929292"/></g><circle cx="168.40" cy="98.55" r="7.2" fill="#d9d9d9"/><text transform="translate(168.40,102.55) scale(.86,1)" text-anchor="middle" font-size="11.4" font-weight="700" fill="#3a3a3a">S</text><circle cx="168.15" cy="128.15" r="5.9" fill="#5fcc8a"/><circle cx="10.10" cy="149.25" r="5.9" fill="#e6cf45"/><circle cx="10.10" cy="170.35" r="4.9" fill="#8b8b8b" stroke="#cdcdcd" stroke-width="1.8"/><circle cx="10.10" cy="191.45" r="4.9" fill="#8b8b8b" stroke="#cdcdcd" stroke-width="1.8"/><circle cx="10.10" cy="212.55" r="4.9" fill="#87689f" stroke="#a274dc" stroke-width="1.8"/><circle cx="10.10" cy="233.65" r="4.9" fill="#8b8b8b" stroke="#cdcdcd" stroke-width="1.8"/></svg>
</div>
<div class="n" style="left:2160.90px;top:175.85px;width:178.40px;height:371.45px">
<div class="b" style="height:260.55px"><i class="l"></i><i class="r"></i></div>
<div class="pv" style="left:52.20px"><svg width="74" height="74" viewBox="0 0 74 74"><rect width="74" height="74" fill="url(#ck)"/><rect y="46" width="74" height="28" fill="url(#fl)"/><path d="M0 50h74M0 53.5h74M0 57.5h74M0 62h74" stroke="#5d6a78" stroke-width="1.4" opacity=".75"/><path d="M0 51.7h74M0 55.5h74M0 59.7h74" stroke="#a9b4c0" stroke-width="1.2" opacity=".6"/><path d="M0 66h12l-5 8h-7zM44 66h22l3 8h-28z" fill="#6f747a" opacity=".8"/><path d="M12 66h32l-3 8h-34z" fill="#8e9092" opacity=".9"/><ellipse cx="41" cy="68.5" rx="9" ry="1.5" fill="#2c2c2c" opacity=".8"/><circle cx="35.8" cy="36.8" r="31.6" fill="url(#gO)"/><g clip-path="url(#cs)" opacity=".24" fill="none" stroke="#b08a5e" stroke-width=".7"><path d="M4 22q32 5 64 0M4 29q32 6 64 0M4 36q32 6.5 64 0M4 42.5q32 7 64 0M4 49q32 7 64 0M4 55q32 7 64 0M8 61q28 6 56 0"/></g><circle cx="36" cy="20.5" r="1" fill="#9a7040" opacity=".5"/><circle cx="31" cy="28.5" r=".8" fill="#9a7040" opacity=".45"/><circle cx="35.8" cy="36.8" r="31.6" fill="url(#rimw)"/></svg></div>
<div class="t" style="width:133.9px"><span class="sl" style="transform:scaleX(1.0324)">Material.1</span></div>
<div class="li" style="top:118.85px;left:41.5px"><span class="sl" style="transform:scaleX(0.9460)">Oberfläche</span></div>
<div class="li" style="top:139.95px;left:51.3px"><span class="sl" style="transform:scaleX(0.9160)">Beckmann.1</span></div>
<div class="li" style="top:161.05px;left:60.6px"><span class="sl" style="transform:scaleX(0.8783)">BSDF-Ebene</span></div>
<div class="li" style="top:182.15px;left:51.3px"><span class="sl" style="transform:scaleX(0.9667)">Diffus</span></div>
<div class="li" style="top:203.25px;left:60.6px"><span class="sl" style="transform:scaleX(0.8783)">BSDF-Ebene</span></div>
<div class="li" style="top:231.85px"><span class="sl" style="transform:scaleX(0.9557)">Alpha</span></div>
<div class="li" style="top:252.95px"><span class="sl" style="transform:scaleX(0.9664)">Abstrahlung</span></div>
<div class="li" style="top:274.05px"><span class="sl" style="transform:scaleX(0.9680)">Normale</span></div>
<div class="li" style="top:295.15px"><span class="sl" style="transform:scaleX(0.9462)">Displacement</span></div>
<div class="li" style="top:316.25px"><span class="sl" style="transform:scaleX(0.9173)">AOV</span></div>
<div class="li" style="top:337.35px"><span class="sl" style="transform:scaleX(0.9587)">Kontext</span></div>
<svg class="ov" width="178.40" height="371.45" viewBox="0 0 178.40 371.45"><g transform="translate(3.30,92.05)"><rect width="13" height="13" rx="3.6" fill="#dcdcdc"/><path d="M6.5 2.2h2.6a1.7 1.7 0 0 1 1.7 1.7v2.6h-4.3z" fill="#929292"/><path d="M2.2 6.5h4.3v4.3h-2.6a1.7 1.7 0 0 1-1.7-1.7z" fill="#929292"/></g><circle cx="168.20" cy="98.55" r="7.2" fill="#d9d9d9"/><text transform="translate(168.20,102.55) scale(.86,1)" text-anchor="middle" font-size="11.4" font-weight="700" fill="#3a3a3a">S</text><path d="M29.40 131.15V191.45 M29.40 149.25H35.00 M29.40 191.45H35.00 M39.00 152.25V170.35H48.50 M39.00 194.45V212.55H48.50" fill="none" stroke="#919191" stroke-width="0.9"/><path d="M25.80 125.55h7.2l-3.6 5.6z" fill="#b4b4b4"/><path d="M35.40 146.65h7.2l-3.6 5.6z" fill="#b4b4b4"/><path d="M35.40 188.85h7.2l-3.6 5.6z" fill="#b4b4b4"/><circle cx="10.10" cy="128.15" r="5.9" fill="#868686"/><circle cx="10.10" cy="149.25" r="5.9" fill="#868686"/><circle cx="10.10" cy="170.35" r="5.9" fill="#5fcc8a"/><circle cx="10.10" cy="191.45" r="5.9" fill="#868686"/><circle cx="10.10" cy="212.55" r="5.9" fill="#5fcc8a"/><circle cx="10.10" cy="241.15" r="4.9" fill="#8b8b8b" stroke="#cdcdcd" stroke-width="1.8"/><circle cx="10.10" cy="262.25" r="4.9" fill="#8c8258" stroke="#ddcd45" stroke-width="1.8"/><circle cx="10.10" cy="283.35" r="4.9" fill="#87689f" stroke="#a274dc" stroke-width="1.8"/><circle cx="10.10" cy="304.45" r="4.9" fill="#87689f" stroke="#a274dc" stroke-width="1.8"/><circle cx="10.10" cy="325.55" r="4.9" fill="#6d6d6d" stroke="#868686" stroke-width="1.8"/><circle cx="10.10" cy="346.65" r="4.9" fill="#626aa0" stroke="#7886d4" stroke-width="1.8"/></svg>
</div>
<div class="n" style="left:1798.60px;top:697.75px;width:178.50px;height:300.65px">
<div class="b" style="height:189.75px"><i class="l"></i><i class="r"></i></div>
<div class="sep"></div>
<div class="pv" style="left:52.25px"><svg width="74" height="74" viewBox="0 0 74 74"><rect width="74" height="74" fill="#2020f2" filter="url(#fnoise)"/></svg></div>
<div class="t" style="width:134.0px"><span class="sl" style="transform:scaleX(1.0503)">Normalen-Map.1</span></div>
<div class="lo" style="top:118.85px"><span style="transform:scaleX(0.9192)">Ergebnis</span></div>
<div class="li" style="top:139.95px"><span class="sl" style="transform:scaleX(0.9680)">Normale</span></div>
<div class="li" style="top:161.05px"><span class="sl" style="transform:scaleX(0.9106)">Stärke</span></div>
<div class="li" style="top:182.15px"><span class="sl" style="transform:scaleX(0.9442)">X umkehren</span></div>
<div class="li" style="top:203.25px"><span class="sl" style="transform:scaleX(0.9410)">Y umkehren</span></div>
<div class="li" style="top:224.35px"><span class="sl" style="transform:scaleX(0.9509)">Z umkehren</span></div>
<div class="li" style="top:245.45px"><span class="sl" style="transform:scaleX(0.9401)">Y &amp; Z vertauschen</span></div>
<div class="li" style="top:266.55px"><span class="sl" style="transform:scaleX(0.9105)">Raum</span></div>
<svg class="ov" width="178.50" height="300.65" viewBox="0 0 178.50 300.65"><g transform="translate(3.30,92.05)"><rect width="13" height="13" rx="3.6" fill="#dcdcdc"/><path d="M6.5 2.2h2.6a1.7 1.7 0 0 1 1.7 1.7v2.6h-4.3z" fill="#929292"/><path d="M2.2 6.5h4.3v4.3h-2.6a1.7 1.7 0 0 1-1.7-1.7z" fill="#929292"/></g><circle cx="168.30" cy="98.55" r="7.2" fill="#d9d9d9"/><text transform="translate(168.30,102.55) scale(.86,1)" text-anchor="middle" font-size="11.4" font-weight="700" fill="#3a3a3a">S</text><circle cx="168.05" cy="128.15" r="5.9" fill="#aa68ee"/><circle cx="10.10" cy="149.25" r="4.9" fill="#8c8258" stroke="#ddcd45" stroke-width="1.8"/><circle cx="10.10" cy="149.25" r="2.3" fill="#fff6a8"/><circle cx="10.10" cy="170.35" r="4.9" fill="#8b8b8b" stroke="#cdcdcd" stroke-width="1.8"/><circle cx="10.10" cy="191.45" r="4.9" fill="#626aa0" stroke="#7886d4" stroke-width="1.8"/><circle cx="10.10" cy="212.55" r="4.9" fill="#626aa0" stroke="#7886d4" stroke-width="1.8"/><circle cx="10.10" cy="233.65" r="4.9" fill="#626aa0" stroke="#7886d4" stroke-width="1.8"/><circle cx="10.10" cy="254.75" r="4.9" fill="#626aa0" stroke="#7886d4" stroke-width="1.8"/><circle cx="10.10" cy="275.85" r="4.9" fill="#626aa0" stroke="#7886d4" stroke-width="1.8"/></svg>
</div>
<div class="n" style="left:2013.10px;top:614.90px;width:178.10px;height:258.45px">
<div class="b" style="height:147.55px"><i class="l"></i><i class="r"></i></div>
<div class="pv" style="left:52.05px"><svg width="74" height="74" viewBox="0 0 74 74"><rect width="74" height="74" fill="url(#ck)"/><rect y="46" width="74" height="28" fill="url(#fl)"/><path d="M0 50h74M0 53.5h74M0 57.5h74M0 62h74" stroke="#5d6a78" stroke-width="1.4" opacity=".75"/><path d="M0 51.7h74M0 55.5h74M0 59.7h74" stroke="#a9b4c0" stroke-width="1.2" opacity=".6"/><path d="M0 66h12l-5 8h-7zM44 66h22l3 8h-28z" fill="#6f747a" opacity=".8"/><path d="M12 66h32l-3 8h-34z" fill="#8e9092" opacity=".9"/><ellipse cx="41" cy="68.5" rx="9" ry="1.5" fill="#2c2c2c" opacity=".8"/><circle cx="35.8" cy="36.8" r="31.6" fill="url(#gB)"/><circle cx="35.8" cy="36.8" r="31.6" fill="url(#rimb)"/></svg></div>
<div class="t" style="width:133.6px"><span class="sl" style="transform:scaleX(0.9923)">Beckmann.1</span></div>
<div class="lo" style="top:118.85px"><span style="transform:scaleX(0.9192)">Ergebnis</span></div>
<div class="li" style="top:139.95px"><span class="sl" style="transform:scaleX(0.9009)">Farbe</span></div>
<div class="li" style="top:161.05px"><span class="sl" style="transform:scaleX(0.9715)">Intensität</span></div>
<div class="li" style="top:182.15px"><span class="sl" style="transform:scaleX(0.9437)">Rauigkeit</span></div>
<div class="li" style="top:203.25px"><span class="sl" style="transform:scaleX(0.9680)">Normale</span></div>
<div class="li" style="top:224.35px"><span class="sl" style="transform:scaleX(0.9536)">Normalenstärke</span></div>
<svg class="ov" width="178.10" height="258.45" viewBox="0 0 178.10 258.45"><g transform="translate(3.30,92.05)"><rect width="13" height="13" rx="3.6" fill="#dcdcdc"/><path d="M6.5 2.2h2.6a1.7 1.7 0 0 1 1.7 1.7v2.6h-4.3z" fill="#929292"/><path d="M2.2 6.5h4.3v4.3h-2.6a1.7 1.7 0 0 1-1.7-1.7z" fill="#929292"/></g><circle cx="167.90" cy="98.55" r="7.2" fill="#d9d9d9"/><text transform="translate(167.90,102.55) scale(.86,1)" text-anchor="middle" font-size="11.4" font-weight="700" fill="#3a3a3a">S</text><circle cx="167.65" cy="128.15" r="5.9" fill="#5fcc8a"/><circle cx="10.10" cy="149.25" r="4.9" fill="#8c8258" stroke="#ddcd45" stroke-width="1.8"/><circle cx="10.10" cy="170.35" r="4.9" fill="#8b8b8b" stroke="#cdcdcd" stroke-width="1.8"/><circle cx="10.10" cy="191.45" r="5.9" fill="#d2d2d2"/><circle cx="10.10" cy="212.55" r="5.9" fill="#aa68ee"/><circle cx="10.10" cy="233.65" r="4.9" fill="#8b8b8b" stroke="#cdcdcd" stroke-width="1.8"/></svg>
</div>
</body></html>
